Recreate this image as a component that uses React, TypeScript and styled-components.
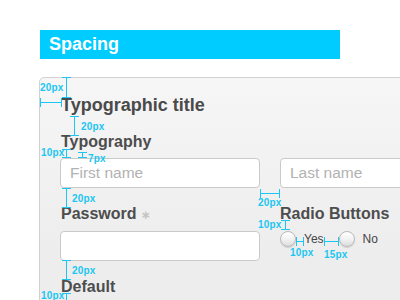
import React from "react";
import styled, { createGlobalStyle } from "styled-components";

const Global = createGlobalStyle`
  html, body { margin: 0; padding: 0; overflow: hidden; background: #ffffff; }
  body { font-family: "Liberation Sans", Arial, sans-serif; }
  * { box-sizing: border-box; }
`;

const CYAN = "#1cc6f2";

const Page = styled.div`
  position: relative;
  width: 400px;
  height: 300px;
  overflow: hidden;
  padding: 30px 0 0 40px;
`;

const Header = styled.div`
  width: 300px;
  height: 29px;
  background: #00ccff;
  color: #ffffff;
  font-size: 18px;
  font-weight: bold;
  line-height: 29px;
  padding-left: 9px;
`;

const Card = styled.div`
  margin: 18px 0 0 -1px;
  width: 420px;
  height: 260px;
  border: 1px solid #d2d2d2;
  border-radius: 5px;
  background: linear-gradient(#f6f6f6, #ededed 180px);
  padding: 16px 0 0 20px;
`;

const Title = styled.div`
  font-size: 18px;
  font-weight: bold;
  line-height: 22px;
  color: #4a4a4a;
  padding-left: 1px;
`;

const Section = styled.div`
  margin-top: 16px;
`;

const Heading = styled.div<{ $flush?: boolean }>`
  font-size: 16px;
  font-weight: bold;
  line-height: 20px;
  color: #4d4d4d;
  padding-left: ${(p) => (p.$flush ? "0" : "1px")};
`;

const Star = styled.span`
  font-family: "DejaVu Sans", sans-serif;
  font-size: 12px;
  font-weight: bold;
  color: #c4c4c4;
  margin-left: 4px;
`;

const Row = styled.div`
  display: flex;
  gap: 20px;
  margin-top: 6px;
`;

const Columns = styled.div`
  display: flex;
  gap: 20px;
  margin-top: 16px;
`;

const Column = styled.div`
  width: 200px;
  flex: none;
`;

const Input = styled.input`
  display: block;
  width: 200px;
  height: 30px;
  flex: none;
  border: 1px solid #cacaca;
  border-radius: 4px;
  background: #ffffff;
  padding: 0 0 0 9px;
  margin: 0;
  font-family: "Liberation Sans", Arial, sans-serif;
  font-size: 15.5px;
  color: #444;
  outline: none;
  &::placeholder { color: #b2b2b2; }
`;

const SpacedInput = styled(Input)`
  margin-top: 6px;
`;

const Radios = styled.div`
  display: flex;
  align-items: center;
  margin-top: 7px;
`;

const Option = styled.label<{ $first?: boolean }>`
  display: flex;
  align-items: center;
  gap: 8px;
  margin-left: ${(p) => (p.$first ? "0" : "15px")};
  font-size: 12px;
  line-height: 16px;
  color: #454545;
`;

const Radio = styled.span`
  width: 16px;
  height: 16px;
  border-radius: 50%;
  border: 1px solid #b9b9b9;
  background: linear-gradient(#ffffff, #f2f2f2 50%, #dcdcdc);
  box-shadow: 0 1px 1px rgba(0, 0, 0, 0.12);
  flex: none;
`;

const Overlay = styled.div`
  position: absolute;
  inset: 0;
  pointer-events: none;
`;

const VDim = styled.div<{ $x: number; $y: number; $len: number }>`
  position: absolute;
  left: ${(p) => p.$x - 4}px;
  top: ${(p) => p.$y}px;
  width: 9px;
  height: ${(p) => p.$len + 1}px;
  border-top: 1px solid ${CYAN};
  border-bottom: 1px solid ${CYAN};
  &::before {
    content: "";
    position: absolute;
    left: 4px;
    top: 0;
    bottom: 0;
    width: 1px;
    background: ${CYAN};
  }
`;

const HDim = styled.div<{ $x: number; $y: number; $len: number }>`
  position: absolute;
  left: ${(p) => p.$x}px;
  top: ${(p) => p.$y - 4}px;
  width: ${(p) => p.$len + 1}px;
  height: 9px;
  border-left: 1px solid ${CYAN};
  border-right: 1px solid ${CYAN};
  &::before {
    content: "";
    position: absolute;
    top: 4px;
    left: 0;
    right: 0;
    height: 1px;
    background: ${CYAN};
  }
`;

const DimLabel = styled.div<{ $x: number; $y: number }>`
  position: absolute;
  left: ${(p) => p.$x}px;
  top: ${(p) => p.$y}px;
  font-size: 10px;
  font-weight: bold;
  line-height: 10px;
  letter-spacing: 0.2px;
  color: ${CYAN};
  white-space: nowrap;
`;

type Dim = { dir: "v" | "h"; x: number; y: number; len: number };
type Lab = { text: string; x: number; y: number };

const dims: Dim[] = [
  { dir: "v", x: 66, y: 77, len: 20 },
  { dir: "h", x: 40, y: 102, len: 21 },
  { dir: "v", x: 74, y: 116, len: 19 },
  { dir: "v", x: 66, y: 149, len: 8 },
  { dir: "v", x: 82, y: 152, len: 5 },
  { dir: "v", x: 66, y: 188, len: 19 },
  { dir: "h", x: 260, y: 193, len: 19 },
  { dir: "v", x: 285, y: 220, len: 9 },
  { dir: "h", x: 296, y: 241, len: 7 },
  { dir: "h", x: 324, y: 241, len: 14 },
  { dir: "v", x: 66, y: 260, len: 19 },
  { dir: "v", x: 66, y: 293, len: 12 },
];

const labels: Lab[] = [
  { text: "20px", x: 40, y: 83 },
  { text: "20px", x: 81, y: 122 },
  { text: "10px", x: 41, y: 148 },
  { text: "7px", x: 88, y: 154 },
  { text: "20px", x: 72, y: 194 },
  { text: "20px", x: 258, y: 198 },
  { text: "10px", x: 258, y: 220 },
  { text: "10px", x: 290, y: 248 },
  { text: "15px", x: 324, y: 250 },
  { text: "20px", x: 72, y: 266 },
  { text: "10px", x: 41, y: 291 },
];

export default function App() {
  return (
    <>
      <Global />
      <Page>
        <Header>Spacing</Header>
        <Card>
          <Title>Typographic title</Title>
          <Section>
            <Heading>Typography</Heading>
            <Row>
              <Input placeholder="First name" />
              <Input placeholder="Last name" />
            </Row>
          </Section>
          <Columns>
            <Column>
              <Heading>
                Password<Star>∗</Star>
              </Heading>
              <SpacedInput type="password" />
              <Section>
                <Heading>Default</Heading>
              </Section>
            </Column>
            <Column>
              <Heading $flush>Radio Buttons</Heading>
              <Radios>
                <Option $first>
                  <Radio />
                  Yes
                </Option>
                <Option>
                  <Radio />
                  No
                </Option>
              </Radios>
            </Column>
          </Columns>
        </Card>
        <Overlay>
          {dims.map((d, i) =>
            d.dir === "v" ? (
              <VDim key={i} $x={d.x} $y={d.y} $len={d.len} />
            ) : (
              <HDim key={i} $x={d.x} $y={d.y} $len={d.len} />
            )
          )}
          {labels.map((l, i) => (
            <DimLabel key={i} $x={l.x} $y={l.y}>
              {l.text}
            </DimLabel>
          ))}
        </Overlay>
      </Page>
    </>
  );
}
